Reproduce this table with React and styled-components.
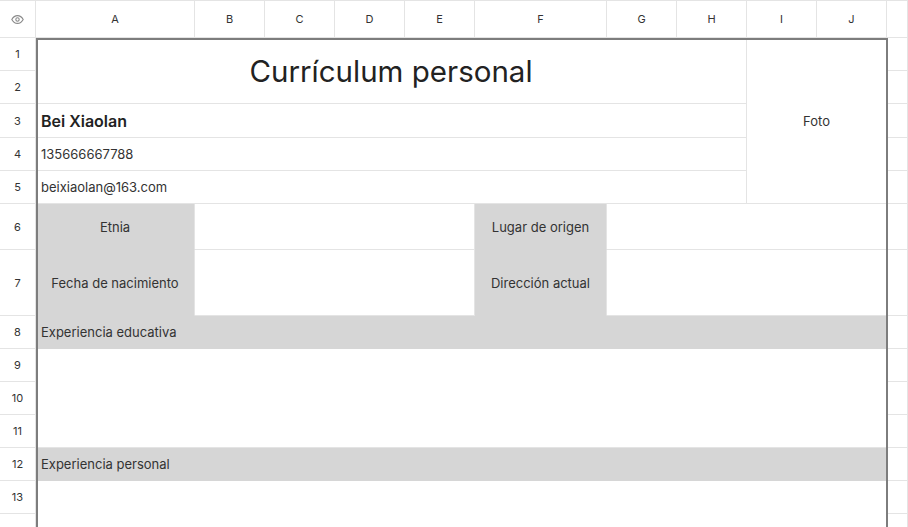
import React from 'react';
import styled, { createGlobalStyle } from 'styled-components';

const GlobalStyle = createGlobalStyle`
    html, body {
        margin: 0;
        padding: 0;
        background: #fff;
    }
    body {
        font-family: Inter, "Noto Sans", "Liberation Sans", sans-serif;
        color: #2b2b2b;
    }
    * { box-sizing: border-box; }
`;

const LINE = '#e4e4e4';
const FILL = '#d6d6d6';

const Sheet = styled.div`
    width: 908px;
    height: 527px;
    overflow: hidden;
    display: grid;
    grid-template-columns: 36px 159px 70px 70px 70px 70px 132px 70px 70px 70px 70px 1fr;
    grid-template-rows: 37px 33px 33px 34px 33px 33px 46px 66px 33px 33px 33px 33px 33px 33px 33px;
    border-top: 1px solid ${LINE};
`;

const HeadCell = styled.div`
    display: flex;
    align-items: center;
    justify-content: center;
    font-size: 11px;
    color: #333;
    border-right: 1px solid ${LINE};
    border-bottom: 1px solid ${LINE};
    grid-column: ${p => p.$col || 'auto'};
    grid-row: ${p => p.$row || 'auto'};
`;

const Cell = styled.div`
    display: flex;
    align-items: center;
    justify-content: ${p => (p.$center ? 'center' : 'flex-start')};
    padding: 0 5px;
    grid-column: ${p => p.$col};
    grid-row: ${p => p.$row};
    background: ${p => (p.$fill ? FILL : '#fff')};
    border-right: 1px solid ${LINE};
    border-bottom: 1px solid ${p => (p.$fill ? FILL : LINE)};
    font-size: ${p => p.$size || 13}px;
    font-weight: ${p => (p.$bold ? 600 : 400)};
    color: ${p => (p.$big ? '#222' : '#333')};
    white-space: nowrap;
`;

const Frame = styled.div`
    grid-column: 2 / 12;
    grid-row: 2 / 16;
    border: 2px solid #7d7d7d;
    border-bottom: none;
    margin-right: -1px;
    z-index: 1;
    pointer-events: none;
`;

const EyeIcon = () => (
    <svg width="13" height="9" viewBox="0 0 13 9" fill="none" stroke="#8a8a8a" strokeWidth="1.1">
        <path d="M0.8 4.5 C2.5 1.4 4.4 0.6 6.5 0.6 C8.6 0.6 10.5 1.4 12.2 4.5 C10.5 7.6 8.6 8.4 6.5 8.4 C4.4 8.4 2.5 7.6 0.8 4.5 Z" />
        <circle cx="6.5" cy="4.5" r="1.7" />
    </svg>
);

const columns = ['A', 'B', 'C', 'D', 'E', 'F', 'G', 'H', 'I', 'J', ''];

export default function App() {
    const rows = Array.from({ length: 14 }, (_, i) => i + 1);
    return (
        <>
            <GlobalStyle />
            <Sheet>
                <HeadCell $col="1" $row="1"><EyeIcon /></HeadCell>
                {columns.map((c, i) => (
                    <HeadCell key={'c' + i} $col={String(i + 2)} $row="1">{c}</HeadCell>
                ))}
                {rows.map(r => (
                    <HeadCell key={'r' + r} $col="1" $row={String(r + 1)}>{r < 14 ? r : ''}</HeadCell>
                ))}
                {rows.map(r => (
                    <HeadCell key={'x' + r} $col="12" $row={String(r + 1)} />
                ))}

                <Cell $col="2 / 10" $row="2 / 4" $center $size={29.5} $big>Currículum personal</Cell>
                <Cell $col="10 / 12" $row="2 / 7" $center>Foto</Cell>
                <Cell $col="2 / 10" $row="4" $size={16} $bold $big>Bei Xiaolan</Cell>
                <Cell $col="2 / 10" $row="5">135666667788</Cell>
                <Cell $col="2 / 10" $row="6">beixiaolan@163.com</Cell>

                <Cell $col="2" $row="7" $fill $center>Etnia</Cell>
                <Cell $col="3 / 7" $row="7" />
                <Cell $col="7" $row="7" $fill $center>Lugar de origen</Cell>
                <Cell $col="8 / 12" $row="7" />

                <Cell $col="2" $row="8" $fill $center>Fecha de nacimiento</Cell>
                <Cell $col="3 / 7" $row="8" />
                <Cell $col="7" $row="8" $fill $center>Dirección actual</Cell>
                <Cell $col="8 / 12" $row="8" />

                <Cell $col="2 / 12" $row="9" $fill>Experiencia educativa</Cell>
                <Cell $col="2 / 12" $row="10 / 13" />
                <Cell $col="2 / 12" $row="13" $fill>Experiencia personal</Cell>
                <Cell $col="2 / 12" $row="14 / 16" />

                <Frame />
            </Sheet>
        </>
    );
}
